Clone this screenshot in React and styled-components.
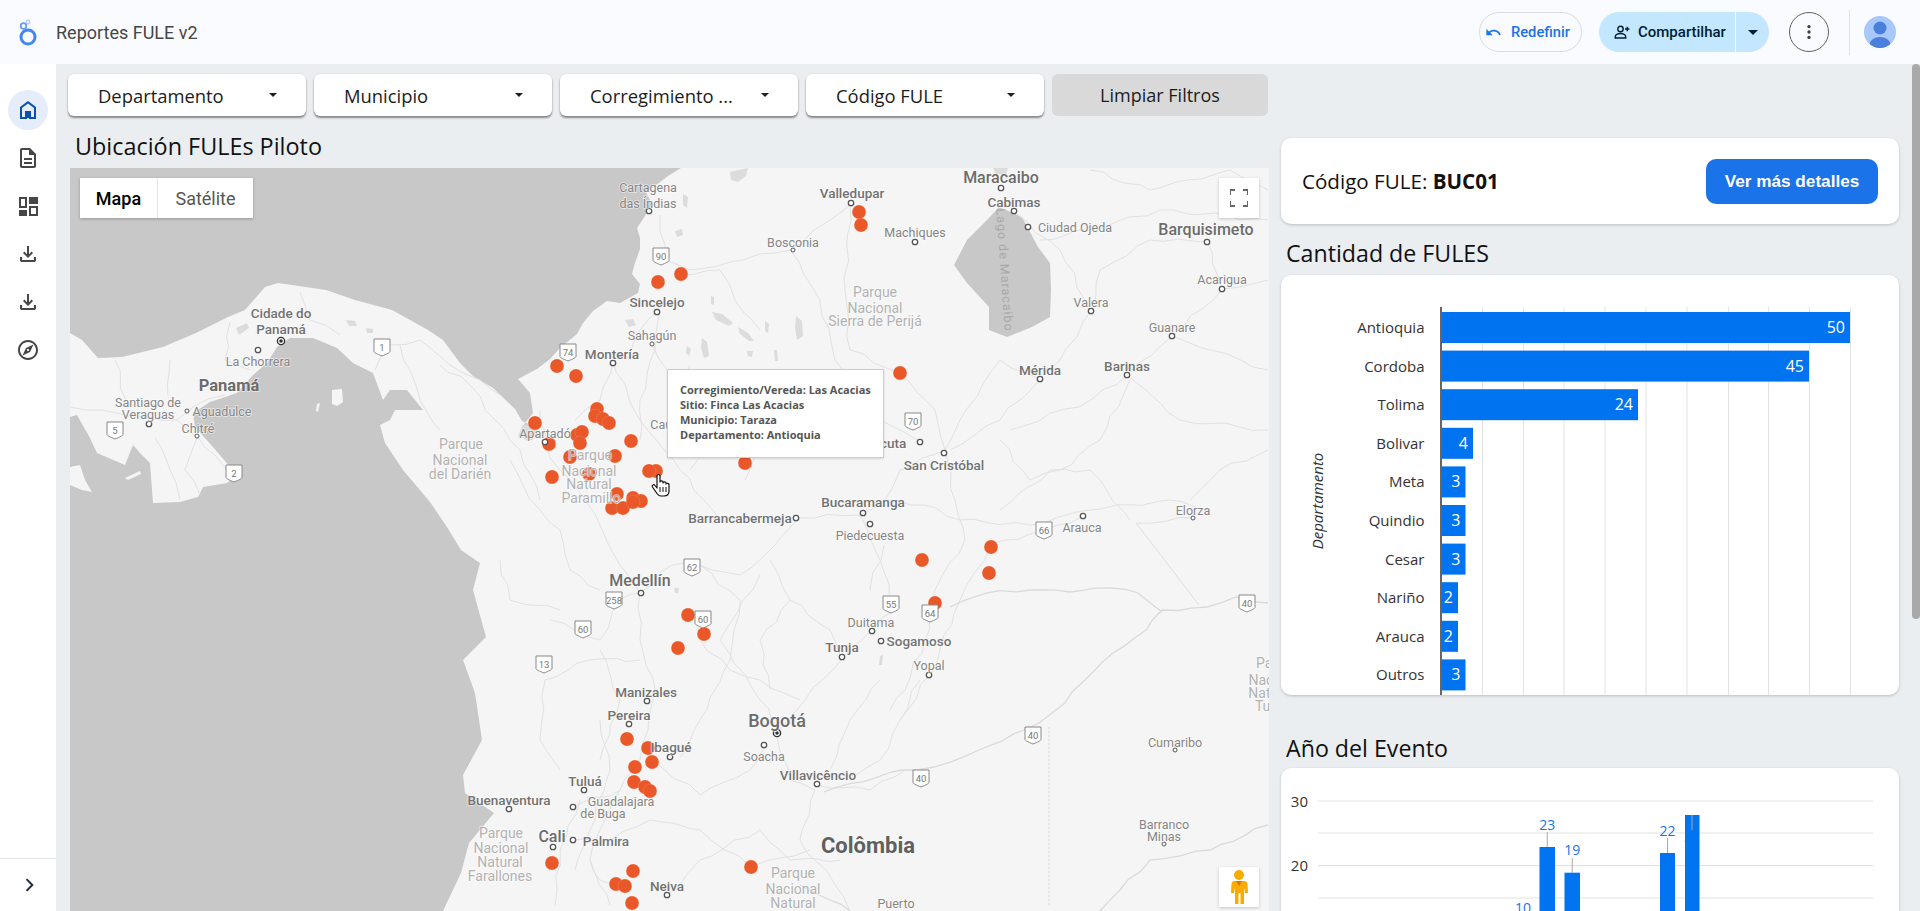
import React from "react";
import styled, { createGlobalStyle } from "styled-components";

const Global = createGlobalStyle`
  html, body { margin: 0; padding: 0; height: 100%; overflow: hidden; background: #eaeef1; }
  #root { height: 100%; }
  * { box-sizing: border-box; }
`;

const Page = styled.div`
  width: 1920px; height: 911px; display: flex; flex-direction: column; overflow: hidden;
  font-family: "Open Sans", sans-serif; position: relative;
`;
const Header = styled.header`
  height: 64px; flex: none; background: #f9fbfe; display: flex; align-items: center;
  padding: 0 24px 0 16px;
`;
const LogoBox = styled.svg`width: 24px; height: 32px; flex: none;`;
const AppTitle = styled.div`
  margin-left: 16px; font: 400 18px Roboto, sans-serif; color: #444746;
`;
const HeaderActions = styled.div`margin-left: auto; display: flex; align-items: center;`;
const ResetButton = styled.button`
  width: 103px; height: 40px; border-radius: 20px; border: 1px solid #d9dce0; background: transparent;
  display: flex; align-items: center; gap: 9px; padding: 0 0 0 5px; color: #1a73e8;
  font: 500 14.7px Roboto, sans-serif;
`;
const ShareGroup = styled.div`
  width: 170px; height: 40px; border-radius: 20px; background: #c2e7ff; margin-left: 17px;
  display: flex; align-items: center; overflow: hidden; color: #001d35;
  font: 500 15px Roboto, sans-serif;
`;
const ShareMain = styled.div`
  width: 137px; height: 100%; display: flex; align-items: center; gap: 7px; padding-left: 14px;
  border-right: 1px solid #f4faff;
`;
const ShareCaret = styled.div`flex: 1; display: flex; justify-content: center; align-items: center;`;
const Caret = styled.span`
  display: block; width: 0; height: 0; border-left: ${p => p.$size || 4}px solid transparent;
  border-right: ${p => p.$size || 4}px solid transparent; border-top: ${p => p.$size || 4}px solid ${p => p.$color || "#1f1f1f"};
`;
const MoreButton = styled.button`
  width: 40px; height: 40px; border-radius: 50%; border: 1px solid #5f6368; background: transparent;
  margin-left: 20px; display: flex; align-items: center; justify-content: center; padding: 0;
`;
const VDivider = styled.div`width: 1px; height: 45px; background: #dfe2e6; margin: 0 14px 0 20px;`;
const Avatar = styled.svg`width: 32px; height: 32px; display: block;`;

const Body = styled.div`flex: 1; display: flex; min-height: 0;`;
const Sidebar = styled.nav`
  width: 56px; flex: none; background: #fff; display: flex; flex-direction: column;
  align-items: center; padding-top: 26px;
`;
const NavItem = styled.div`
  width: 40px; height: 40px; margin-bottom: 8px; border-radius: 50%;
  display: flex; align-items: center; justify-content: center;
  background: ${p => (p.$active ? "#e4edf9" : "transparent")};
  color: ${p => (p.$active ? "#0b4fb3" : "#444746")};
`;
const NavFooter = styled.div`
  margin-top: auto; width: 100%; height: 53px; border-top: 1px solid #dfe2e6;
  display: flex; align-items: center; justify-content: center; color: #1f2d3d; padding-left: 1px;
`;
const Main = styled.main`
  flex: 1; min-width: 0; display: flex; align-items: flex-start; gap: 13px;
  padding: 10px 21px 0 12px; overflow: hidden; background: #eaeef1; position: relative;
`;
const LeftColumn = styled.section`width: 1200px; flex: none;`;
const FilterRow = styled.div`display: flex; gap: 8px;`;
const FilterButton = styled.div`
  width: 238px; height: 42px; background: #fff; border-radius: 6px;
  box-shadow: 0 2px 2px rgba(0,0,0,.42), 0 0 2px rgba(0,0,0,.1);
  display: flex; align-items: center; justify-content: space-between; padding: 0 29px 0 30px;
  font-size: 18.4px; color: #1c1c1c;
`;
const ClearButton = styled.div`
  flex: 1; height: 42px; background: #d9d9d9; border-radius: 6px; display: flex;
  align-items: center; justify-content: center; font-size: 18px; color: #1c1c1c;
`;
const MapTitle = styled.h2`
  margin: 0; height: 52px; padding: 10px 0 0 7px; font-weight: 400; font-size: 23.4px;
  line-height: 40px; color: #111;
`;
const MapFrame = styled.div`
  margin-left: 2px; width: 1199px; height: 743px; position: relative; overflow: hidden; background: #f5f5f5;
`;
const MapCanvas = styled.svg`display: block; width: 1199px; height: 743px;`;
const MapText = styled.text`
  font-family: Roboto, sans-serif;
  font-size: ${p => ({ s: 12.5, m: 13.5, l: 16, xl: 18, c: 22, p: 16.5, g: 14 }[p.$k])}px;
  font-weight: ${p => ({ s: 400, m: 500, l: 500, xl: 500, c: 700, p: 700, g: 400 }[p.$k])};
  fill: ${p => ({ s: "#858585", m: "#727272", l: "#6c6c6c", xl: "#6c6c6c", c: "#606060", p: "#6c6c6c", g: "#b2b2b2" }[p.$k])};
  stroke: rgba(255,255,255,.6); stroke-width: 1.5px; paint-order: stroke; dominant-baseline: central;
`;
const LakeText = styled.text`
  font-family: Roboto, sans-serif; font-size: 12.5px; letter-spacing: 1px; fill: #a8a8a8;
  text-anchor: middle; dominant-baseline: central;
`;
const ShieldText = styled.text`
  font-family: Roboto, sans-serif; font-size: 9.5px; fill: #777; text-anchor: middle; dominant-baseline: central;
`;
const MapTypeControl = styled.div`
  position: absolute; left: 10px; top: 10px; height: 40px; display: flex; background: #fff;
  box-shadow: 0 1px 3px rgba(0,0,0,.25); font-family: Roboto, sans-serif;
`;
const MapTypeOption = styled.div`
  width: ${p => p.$w}px; display: flex; align-items: center; justify-content: center;
  color: ${p => (p.$on ? "#000" : "#565656")}; font-weight: ${p => (p.$on ? 500 : 400)};
  font-size: 18px; border-right: ${p => (p.$on ? "1px solid #e6e6e6" : "none")};
`;
const MapIconButton = styled.div`
  position: absolute; right: 10px; width: 40px; height: 40px; background: #fff;
  box-shadow: 0 1px 3px rgba(0,0,0,.2); display: flex; align-items: center; justify-content: center;
  top: ${p => p.$top}px;
`;
const Tooltip = styled.div`
  position: absolute; left: 597px; top: 201px; width: 217px; height: 89px; background: #fff;
  border: 1px solid #ccc; box-shadow: 0 1px 2px rgba(0,0,0,.12); padding: 12px 0 0 12px;
  font-size: 11px; font-weight: 700; line-height: 15px; color: #555; white-space: nowrap;
`;
const HandCursor = styled.svg`position: absolute; left: 581px; top: 305px; width: 20px; height: 24px;`;

const RightColumn = styled.section`width: 618px; flex: none; padding-top: 64px;`;
const Card = styled.div`
  background: #fff; border-radius: 10px; box-shadow: 0 1px 3px rgba(0,0,0,.2);
  height: ${p => p.$h}px; overflow: hidden;
`;
const CodeCard = styled(Card)`
  display: flex; align-items: center; justify-content: space-between; padding: 0 21px;
`;
const CodeText = styled.div`font-size: 20.6px; color: #111; b { font-weight: 700; }`;
const DetailButton = styled.button`
  width: 172px; height: 45px; border-radius: 10px; background: #1a73e8; border: none; color: #fff;
  font: 700 17.2px "Liberation Sans", Arial, sans-serif; padding: 0;
`;
const SectionTitle = styled.h3`
  margin: ${p => p.$m}; height: 40px; padding-left: 5px; font-weight: 400; font-size: 23.2px;
  line-height: 40px; color: #111;
`;
const ChartSvg = styled.svg`display: block; width: 618px; height: ${p => p.$h}px;`;
const ChartText = styled.text`
  font-family: "Open Sans", sans-serif; font-size: ${p => p.$s || 15}px; fill: ${p => p.$c || "#333"};
  text-anchor: ${p => p.$a || "end"}; font-style: ${p => p.$i ? "italic" : "normal"};
`;
const ScrollThumb = styled.div`
  position: absolute; right: 0; top: 0; width: 8px; height: 555px; background: #a9a9a9; border-radius: 4px;
`;

const WATER = "#c8c8c8";
const caribbean = "70,168 681,168 668,176 655,186 646,192 652,204 645,216 637,228 640,238 640,249 635,263 632,274 640,284 638,293 620,303 607,301 593,311 583,323 577,334 560,348 550,359 537,369 518,379 530,393 533,413 525,423 518,436 532,440 538,428 522,421 515,409 493,388 473,376 460,363 443,340 428,330 392,310 355,300 326,290 278,283 265,287 245,310 228,317 196,333 163,347 122,357 98,358 82,340 70,333";
const pacific = "70,417 77,415 90,438 97,453 125,465 133,445 140,453 150,463 153,503 180,502 198,497 203,487 227,483 237,475 213,447 195,427 193,413 210,402 237,393 253,375 267,363 277,347 290,338 313,338 337,348 353,363 373,373 383,400 390,390 407,390 423,410 395,410 390,420 380,425 385,443 403,470 430,502 447,527 461,550 480,563 473,590 486,637 463,660 475,693 482,740 463,775 465,793 494,813 469,843 461,873 443,911 70,911";
const lake = "999,207 1022,217 1038,247 1050,263 1051,290 1050,317 1032,327 1007,337 989,330 989,307 967,283 954,265 967,240 987,220";
const islands = [
  "70,467 80,465 85,480 92,492 82,490 70,485", "332,390 342,389 343,402 337,406 332,404",
  "317,404 320,403 318,412 316,411", "125,478 140,471 141,474 128,480",
];
const ponds = [
  "730,172 748,168 746,176 738,182 731,180", "683,194 688,197 687,208 683,205", "687,346 691,349 689,356 686,353",
  "712,312 722,314 733,323 729,326 716,320", "738,327 748,333 754,341 749,341 740,334", "796,316 802,321 803,336 797,340 795,328",
  "702,338 707,342 709,356 704,358 701,348", "747,351 753,351 752,357 748,356", "765,321 769,324 768,333 765,331",
  "625,320 633,319 636,325 629,327", "236,328 247,323 249,328 239,335", "346,320 355,321 357,326 349,326",
  "366,328 373,329 373,333 367,333", "993,168 1008,168 1006,175 996,174", "675,231 682,229 683,235 677,237",
  "522,425 536,424 538,436 528,441 519,436", "880,656 883,655 882,665 879,665", "674,588 679,588 678,593 675,593",
  "711,296 714,297 714,305 711,304", "774,350 777,350 778,361 775,361",
];
const roads = [
  "640,593 620,565 600,525 585,500 560,470 545,445 540,410",
  "640,593 672,565 700,565 740,575 775,545 798,518 860,515 885,500 925,505 960,520 1030,525 1090,510 1170,500 1210,510",
  "640,593 640,640 655,690 648,730 640,760 620,790 600,830 590,860 610,905",
  "652,760 700,795 750,770 765,745", "860,515 880,560 895,610 872,630 845,655 805,700 780,730",
  "945,450 955,500 965,540 935,590 925,640 905,690 890,710", "777,735 790,780 815,790 800,840 835,885 850,911",
  "817,785 870,790 905,770", "660,310 655,350 640,400 640,440", "660,215 665,260 690,270 730,262 790,250 850,205",
  "790,250 820,300 835,360 880,420 920,442", "850,205 845,290 850,350 900,373", "900,373 935,410 945,450",
  "1014,212 1060,250 1091,311 1060,360 1040,379 1000,420 950,450", "1207,242 1222,289 1172,336 1127,375 1091,400 1010,430",
  "1207,242 1150,240 1100,270 1091,311", "1222,289 1268,280", "1172,336 1268,370", "1127,375 1180,420 1268,430",
  "1040,379 1000,360 960,420 945,450", "613,363 640,420 680,470 720,520", "613,363 600,400 575,420",
  "657,312 640,330 628,360", "652,344 680,400 690,365", "681,274 720,270 735,300 760,330",
  "884,545 870,590", "885,500 900,470 945,450", "1083,516 1044,530 990,545 960,600 930,675 900,720",
  "1193,518 1136,523", "700,565 740,600 730,660 700,720 680,757", "760,575 720,640 760,700 780,730",
  "600,720 610,770 590,830 575,870", "580,800 560,850 555,905", "573,807 620,790", "573,840 610,840 650,820 700,830 750,867 810,850",
  "667,895 700,860 760,830 790,860 840,860", "620,890 600,880 590,860", "550,620 600,640 620,600 640,593",
  "545,680 540,740 560,770", "545,680 590,660 640,660", "500,560 510,600 560,610",
  "70,407 103,410 147,417 177,420 193,407 225,395", "177,420 200,440 215,455 232,478", "155,438 170,470 180,500",
  "197,438 185,470 200,495", "115,360 126,400", "170,360 168,395", "230,322 225,360 250,370", "300,292 310,320 340,335",
  "375,370 390,345 420,340 450,365 480,380 500,395", "440,365 470,385 495,420 520,450 540,500", "400,345 420,400 440,430",
  "510,460 530,500 560,530 570,570 600,590", "1090,170 1150,190 1230,170 1268,190", "1040,240 1090,230 1160,210 1268,220",
  "1130,520 1090,470 1050,470 1000,510", "1130,380 1100,440 1060,470", "1268,450 1220,470 1190,500", "770,560 790,600 830,630 840,655",
  "700,640 730,670 760,680 800,700", "880,680 850,720 830,770", "920,680 900,720 880,760 850,780", "1000,440 1030,480 1060,470",
  "790,600 760,640 770,690", "600,650 620,700 600,760", "690,470 720,430 760,400", "745,480 760,440 800,420",
];
const rivers = [
  "824,792 901,770 934,767 979,750 1024,730 1052,713 1085,680 1113,653 1146,630 1162,610 1207,607 1236,597 1268,603",
  "950,607 987,593 1030,590 1070,592 1109,588 1138,593 1162,612",
  "1100,911 1120,890 1150,860 1210,850 1268,825", "800,885 830,900 850,911",
];
// breaks each hand-traced course into short, slightly uneven stretches, as roads on a map are
const wiggle = (points, amp) => {
  const pts = points.split(" ").map(p => p.split(",").map(Number));
  const out = [];
  pts.forEach(([x, y], i) => {
    if (i > 0) {
      const [px, py] = pts[i - 1];
      const steps = Math.max(1, Math.round(Math.hypot(x - px, y - py) / 14));
      for (let s = 1; s < steps; s++) {
        const t = s / steps;
        const n = Math.sin((x + y) * 0.37 + s * 2.3) * amp;
        const m = Math.cos((x - y) * 0.29 + s * 1.7) * amp;
        out.push(`${(px + (x - px) * t + n).toFixed(1)},${(py + (y - py) * t + m).toFixed(1)}`);
      }
    }
    out.push(`${x},${y}`);
  });
  return out.join(" ");
};
const pins = [
  [557,366],[576,376],[658,282],[681,274],[535,423],[597,409],[595,416],[603,419],[609,423],[577,435],[582,432],[580,443],
  [549,444],[631,441],[615,456],[570,457],[552,477],[589,474],[656,471],[649,471],[617,494],[612,508],[623,508],[633,498],
  [641,501],[633,502],[859,212],[861,225],[900,373],[745,463],[922,560],[991,547],[989,573],[935,603],[688,615],[704,634],
  [678,648],[751,867],[627,739],[648,748],[652,762],[635,767],[634,782],[645,787],[650,791],[552,863],[633,871],[616,884],
  [625,886],[632,903],
];
const dots = [
  [258,350],[149,424],[187,411,2],[197,436,2],[613,363],[657,312],[652,344,2],[649,211],[545,442],[851,203],[793,250,2],
  [915,242],[1001,188],[1014,211],[1028,227],[1207,242],[1222,289],[1091,311],[1172,336],[1127,375],[1040,379],[920,442],
  [944,453],[796,518],[863,513],[870,524],[1083,516],[1193,518,2],[641,593],[872,631],[881,641],[842,657],[929,675],
  [647,701],[764,745],[817,784],[670,757],[1175,750,2],[1164,844,2],[667,895],[629,724],[584,790],[573,807],[573,840],[553,847],[509,809],
];
const shields = [
  ["90",661,256],["74",568,352],["70",913,421],["1",382,347],["5",115,430],["2",234,473],["258",614,600],["60",583,629],
  ["13",544,664],["62",692,567],["60",703,619],["55",891,604],["64",930,613],["66",1044,530],["40",1247,603],["40",1033,735],["40",921,778],
];
const labels = [
  ["Cidade do",281,313,"m"],["Panamá",281,329,"m"],["La Chorrera",258,361,"s"],["Panamá",229,385,"p"],["Santiago de",148,402,"s"],
  ["Veraguas",148,414,"s"],["Aguadulce",222,411,"s"],["Chitré",198,428,"s"],["Cartagena",648,187,"s"],["das Índias",648,203,"s"],
  ["Valledupar",852,193,"m"],["Bosconia",793,242,"s"],["Machiques",915,232,"s"],["Maracaibo",1001,177,"l"],["Cabimas",1014,202,"m"],
  ["Ciudad Ojeda",1075,227,"s"],["Barquisimeto",1206,229,"l"],["Acarigua",1222,279,"s"],["Valera",1091,302,"s"],["Guanare",1172,327,"s"],
  ["Barinas",1127,366,"m"],["Mérida",1040,370,"m"],["Parque",875,292,"g"],["Nacional",875,308,"g"],["Sierra de Perijá",875,321,"g"],
  ["Sincelejo",657,302,"m"],["Sahagún",652,335,"s"],["Montería",612,354,"m"],["Apartadó",545,433,"s"],["San Cristóbal",944,465,"m"],
  ["Cúcuta",885,443,"m"],["Caucasia",676,424,"s"],["Parque",461,444,"g"],["Nacional",460,460,"g"],["del Darién",460,474,"g"],
  ["Parque",590,455,"g"],["Nacional",589,471,"g"],["Natural",589,484,"g"],["Paramillo",591,498,"g"],["Barrancabermeja",740,518,"m"],
  ["Bucaramanga",863,502,"m"],["Piedecuesta",870,535,"s"],["Arauca",1082,527,"s"],["Elorza",1193,510,"s"],["Medellín",640,580,"l"],
  ["Manizales",646,692,"m"],["Pereira",629,715,"m"],["Ibagué",671,747,"m"],["Bogotá",777,720,"xl"],["Soacha",764,756,"s"],
  ["Villavicêncio",818,775,"m"],["Duitama",871,622,"s"],["Sogamoso",919,641,"m"],["Tunja",842,647,"m"],["Yopal",929,665,"s"],
  ["Cumaribo",1175,742,"s"],["Barranco",1164,824,"s"],["Minas",1164,836,"s"],["Colômbia",868,845,"c"],["Parque",793,873,"g"],
  ["Nacional",793,889,"g"],["Natural",793,903,"g"],["Puerto",896,903,"s"],["Neiva",667,886,"m"],["Parque",1278,663,"g"],
  ["Nacional",1276,680,"g"],["Natural",1271,693,"g"],["Tuparro",1279,706,"g"],["Buenaventura",509,800,"m"],["Tuluá",585,781,"m"],
  ["Guadalajara",621,801,"s"],["de Buga",603,813,"s"],["Cali",552,836,"l"],["Palmira",606,841,"m"],["Parque",501,833,"g"],
  ["Nacional",501,848,"g"],["Natural",500,862,"g"],["Farallones",500,876,"g"],
];

const filters = ["Departamento", "Municipio", "Corregimiento ...", "Código FULE"];
const navIcons = [
  <g key="h"><path d="M6 19h3v-6h6v6h3v-9l-6-4.500L6 10v9zm-2 2V9l8-6 8 6v12h-7v-6h-2v6H4z" /><path d="M10 14h4v6h-4z" /></g>,
  <path key="d" d="M8 16h8v2H8zm0-4h8v2H8zm6-10H6c-1.100 0-2 .9-2 2v16c0 1.100.89 2 1.990 2H18c1.100 0 2-.9 2-2V8l-6-6zm4 18H6V4h7v5h5v11z" />,
  <path key="b" fillRule="evenodd" d="M3 3h8v11H3zM5 5v7h4V5zM13 3h9v7h-9zM3 16h8v6H3zM13 12h9v10h-9zM15 14v6h5v-6z" />,
  <path key="l1" d="M12 16l-5-5 1.400-1.450 2.600 2.600V4h2v8.150l2.600-2.600L17 11l-5 5zm-6 4c-.55 0-1.020-.2-1.410-.59C4.200 19.020 4 18.550 4 18v-3h2v3h12v-3h2v3c0 .55-.2 1.020-.59 1.410-.39.39-.86.59-1.410.59H6z" />,
  <path key="l2" d="M12 16l-5-5 1.400-1.450 2.600 2.600V4h2v8.150l2.600-2.600L17 11l-5 5zm-6 4c-.55 0-1.020-.2-1.410-.59C4.200 19.020 4 18.550 4 18v-3h2v3h12v-3h2v3c0 .55-.2 1.020-.59 1.410-.39.39-.86.59-1.410.59H6z" />,
  <path key="e" d="M12 2C6.480 2 2 6.480 2 12s4.480 10 10 10 10-4.480 10-10S17.520 2 12 2zm0 18c-4.410 0-8-3.590-8-8s3.590-8 8-8 8 3.590 8 8-3.590 8-8 8zm-5.500-2.500l7.510-3.490L17.500 6.500 9.990 9.990 6.500 17.500zm5.500-6.600c.61 0 1.100.49 1.100 1.100s-.49 1.100-1.100 1.100-1.100-.49-1.100-1.100.49-1.100 1.100-1.100z" />,
];
const BAR_WIDTH = { 50: 408, 45: 367, 24: 196, 4: 31, 3: 23.5, 2: 16 };
const departments = [
  ["Antioquia",50],["Cordoba",45],["Tolima",24],["Bolivar",4],["Meta",3],["Quindio",3],["Cesar",3],["Nariño",2],["Arauca",2],["Outros",3],
];
const gridX = [1482.5,1523.5,1564,1605,1646,1687,1728.5,1768.5,1809.5,1850.5];
const yearBars = [
  { x: 1539.5, w: 15.5, top: 847, v: "23", ly: 830, t: 832 },
  { x: 1564.5, w: 15.5, top: 872.7, v: "19", ly: 855, t: 858 },
  { x: 1660, w: 15, top: 853, v: "22", ly: 836, t: 838 },
];

function WorldMap() {
  return (
    <MapCanvas viewBox="70 168 1199 743">
      <rect x="70" y="168" width="1199" height="743" fill="#f5f5f5" />
      <polygon points={caribbean} fill={WATER} />
      <polygon points={pacific} fill={WATER} />
      <polygon points={lake} fill={WATER} />
      {islands.map((p, i) => <polygon key={i} points={p} fill="#f5f5f5" />)}
      {ponds.map((p, i) => <polygon key={i} points={p} fill="#dcdcdc" />)}
      {roads.map((p, i) => <polyline key={i} points={wiggle(p, 2)} fill="none" stroke="#e1e1e1" strokeWidth="1" />)}
      {rivers.map((p, i) => <polyline key={i} points={wiggle(p, 1.5)} fill="none" stroke="#dadada" strokeWidth="1.3" />)}
      <line x1="1049" y1="727" x2="1049" y2="907" stroke="#d4d4d4" strokeDasharray="2 2" />
      <line x1="1136" y1="523" x2="1199" y2="605" stroke="#dedede" />
      {pins.map(([x, y], i) => (
        <circle key={i} cx={x} cy={y} r="6.900" fill="#ea5729" stroke="rgba(255,255,255,.25)" strokeWidth=".5" />
      ))}
      {shields.map(([t, x, y], i) => (
        <g key={i}>
          <path d={`M${x - 8} ${y - 8}h16v12.500c0 1-3 2.500-8 4.500c-5-2-8-3.500-8-4.500z`} fill="#fff" stroke="#888" strokeWidth="1" strokeLinejoin="round" />
          <ShieldText x={x} y={y}>{t}</ShieldText>
        </g>
      ))}
      {dots.map(([x, y, r], i) => (
        <circle key={i} cx={x} cy={y} r={r || 2.7} fill="#fff" stroke="#555" strokeWidth={r ? 1 : 1.3} />
      ))}
      <circle cx="281" cy="341" r="3.600" fill="#fff" stroke="#333" strokeWidth="1.400" />
      <circle cx="281" cy="341" r="1.800" fill="#333" />
      <circle cx="777" cy="733" r="3.600" fill="#fff" stroke="#333" strokeWidth="1.400" />
      <circle cx="777" cy="733" r="1.800" fill="#333" />
      <LakeText transform="translate(1005 270) rotate(86)">Lago de Maracaibo</LakeText>
      {labels.map(([t, x, y, k], i) => (
        <MapText key={i} x={x} y={y} $k={k} textAnchor="middle">{t}</MapText>
      ))}
    </MapCanvas>
  );
}

export default function App() {
  return (
    <Page>
      <Global />
      <Header>
        <LogoBox viewBox="0 0 24 32">
          <circle cx="12" cy="21" r="7" fill="none" stroke="#4285f4" strokeWidth="3" />
          <circle cx="7.500" cy="10" r="2.800" fill="none" stroke="#669df6" strokeWidth="1.800" />
          <circle cx="12" cy="6" r="1.800" fill="none" stroke="#aecbfa" strokeWidth="1.300" />
        </LogoBox>
        <AppTitle>Reportes FULE v2</AppTitle>
        <HeaderActions>
          <ResetButton>
            <svg width="17" height="17" viewBox="0 0 24 24" fill="#1a73e8"><path d="M12.500 8c-2.650 0-5.050.99-6.900 2.600L2 7v9h9l-3.620-3.620c1.390-1.160 3.160-1.880 5.120-1.880 3.540 0 6.550 2.310 7.600 5.500l2.370-.78C21.080 11.030 17.150 8 12.500 8z" /></svg>
            Redefinir
          </ResetButton>
          <ShareGroup>
            <ShareMain>
              <svg width="18" height="18" viewBox="0 0 24 24" fill="none" stroke="#001d35" strokeWidth="1.900"><circle cx="10" cy="8" r="3.600" /><path d="M3 20v-1.500c0-2.800 3.500-4.500 7-4.500s7 1.700 7 4.500V20z" /><path d="M19 5v6M16 8h6" /></svg>
              Compartilhar
            </ShareMain>
            <ShareCaret><Caret $size={5} $color="#001d35" /></ShareCaret>
          </ShareGroup>
          <MoreButton>
            <svg width="20" height="20" viewBox="0 0 24 24" fill="#3c4043"><circle cx="12" cy="5.500" r="2" /><circle cx="12" cy="12" r="2" /><circle cx="12" cy="18.500" r="2" /></svg>
          </MoreButton>
          <VDivider />
          <Avatar viewBox="0 0 32 32">
            <defs><clipPath id="av"><circle cx="16" cy="16" r="16" /></clipPath></defs>
            <g clipPath="url(#av)">
              <rect width="32" height="32" fill="#a8c7fa" />
              <circle cx="16" cy="12" r="6.500" fill="#4a7fdc" />
              <ellipse cx="16" cy="29" rx="10.500" ry="8" fill="#4a7fdc" />
            </g>
          </Avatar>
        </HeaderActions>
      </Header>
      <Body>
        <Sidebar>
          {navIcons.map((icon, i) => (
            <NavItem key={i} $active={i === 0}>
              <svg width="24" height="24" viewBox="0 0 24 24" fill="currentColor">{icon}</svg>
            </NavItem>
          ))}
          <NavFooter>
            <svg width="20" height="20" viewBox="0 0 24 24" fill="none" stroke="currentColor" strokeWidth="2.400"><path d="M9 5l7 7-7 7" /></svg>
          </NavFooter>
        </Sidebar>
        <Main>
          <LeftColumn>
            <FilterRow>
              {filters.map(f => (
                <FilterButton key={f}>{f}<Caret /></FilterButton>
              ))}
              <ClearButton>Limpiar Filtros</ClearButton>
            </FilterRow>
            <MapTitle>Ubicación FULEs Piloto</MapTitle>
            <MapFrame>
              <WorldMap />
              <MapTypeControl>
                <MapTypeOption $on $w={78}>Mapa</MapTypeOption>
                <MapTypeOption $w={95}>Satélite</MapTypeOption>
              </MapTypeControl>
              <MapIconButton $top={10}>
                <svg width="18" height="18" viewBox="0 0 18 18" fill="none" stroke="#666" strokeWidth="2"><path d="M0 6V1h5M13 1h5v5M18 12v5h-5M5 17H0v-5" /></svg>
              </MapIconButton>
              <MapIconButton $top={699}>
                <svg width="18" height="36" viewBox="0 0 18 36">
                  <circle cx="9" cy="6" r="5" fill="#f9ab00" />
                  <path d="M4 12h10c2 0 3 1 3.500 3l.5 9h-3l-1-6v17h-3.500v-11h-2v11H5V18l-1 6H1l.5-9c.5-2 1-3 2.500-3z" fill="#f9ab00" />
                  <path d="M6 12l3 5 3-5z" fill="#e37400" />
                </svg>
              </MapIconButton>
              <Tooltip>
                Corregimiento/Vereda: Las Acacias<br />
                Sitio: Finca Las Acacias<br />
                Municipio: Taraza<br />
                Departamento: Antioquia
              </Tooltip>
              <HandCursor viewBox="0 0 20 24">
                <path d="M6 3c0-2 3-2 3 0v6c0-1.500 3-1.500 3 0v1c0-1.500 3-1.500 3 0v1c0-1 3-1 3 .5V18c0 3-2 5-5 5H10c-2 0-3-1-4-2.500L1.500 14c-1-2 1.500-3 2.500-1.500L6 15z" fill="#fff" stroke="#111" strokeWidth="1.200" strokeLinejoin="round" />
                <path d="M9 14v5M12 14v5M15 14v5" stroke="#111" strokeWidth="1" />
              </HandCursor>
            </MapFrame>
          </LeftColumn>
          <RightColumn>
            <CodeCard $h={86}>
              <CodeText>Código FULE: <b>BUC01</b></CodeText>
              <DetailButton>Ver más detalles</DetailButton>
            </CodeCard>
            <SectionTitle $m="9px 0 2px">Cantidad de FULES</SectionTitle>
            <Card $h={420}>
              <ChartSvg $h={420} viewBox="1281 275 618 420">
                {gridX.map(x => <line key={x} x1={x} x2={x} y1="307" y2="695" stroke="#e3e3e3" />)}
                {departments.map(([name, v], i) => {
                  const y = 312 + i * 38.6;
                  const w = BAR_WIDTH[v];
                  return (
                    <g key={name}>
                      <rect x="1442" y={y} width={w} height="31" fill="#0073f0" />
                      <ChartText x="1424.500" y={y + 21}>{name}</ChartText>
                      <ChartText x={1442 + w - 5} y={y + 21} $s={16} $c="#fff">{v}</ChartText>
                    </g>
                  );
                })}
                <line x1="1441" x2="1441" y1="307" y2="695" stroke="#333" strokeWidth="1.500" />
                <ChartText x="0" y="0" $s={15} $i $a="middle" transform="translate(1323 501) rotate(-90)">Departamento</ChartText>
              </ChartSvg>
            </Card>
            <SectionTitle $m="33px 0 0">Año del Evento</SectionTitle>
            <Card $h={400}>
              <ChartSvg $h={400} viewBox="1281 768 618 400">
                {[801, 833, 865.7, 898].map(y => <line key={y} x1="1318" x2="1873" y1={y} y2={y} stroke="#e3e3e3" strokeWidth="1.200" />)}
                <ChartText x="1308" y="807">30</ChartText>
                <ChartText x="1308" y="871">20</ChartText>
                {yearBars.map(b => (
                  <g key={b.v}>
                    <line x1={b.x + b.w / 2} x2={b.x + b.w / 2} y1={b.t} y2={b.top} stroke="#aaa" />
                    <rect x={b.x} y={b.top} width={b.w} height="300" fill="#0073f0" />
                    <ChartText x={b.x + b.w / 2} y={b.ly} $s={14} $c="#1a73e8" $a="middle">{b.v}</ChartText>
                  </g>
                ))}
                <ChartText x="1523" y="913" $s={14} $c="#1a73e8" $a="middle">10</ChartText>
                <ChartText x="1688" y="842" $s={14} $c="#1a73e8" $a="middle">2</ChartText>
                <rect x="1685" y="815" width="14.500" height="300" fill="#0073f0" />
                <line x1="1692" x2="1692" y1="815" y2="830" stroke="#aaa" />
              </ChartSvg>
            </Card>
            <ScrollThumb />
          </RightColumn>
        </Main>
      </Body>
    </Page>
  );
}
